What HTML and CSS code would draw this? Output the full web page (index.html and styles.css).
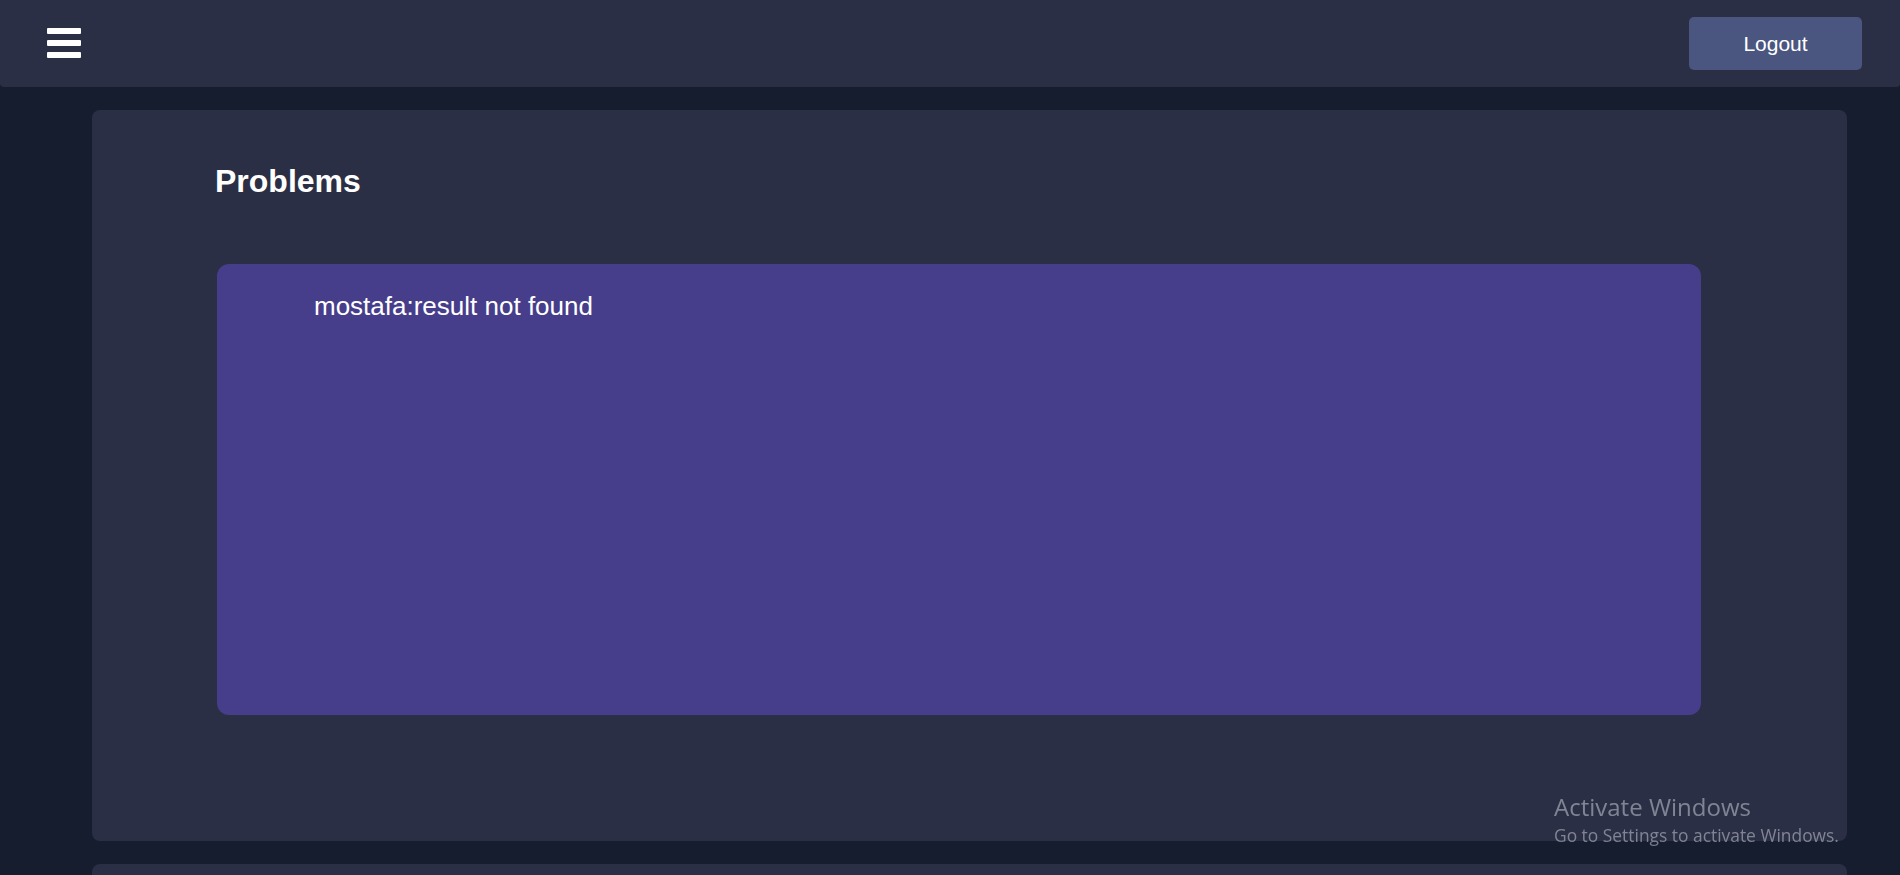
FILE: index.html
```html
<!DOCTYPE html>
<html lang="en">
<head>
<meta charset="utf-8">
<title>Problems</title>
<link rel="stylesheet" href="styles.css">
</head>
<body>
<header class="topbar">
  <button class="menu-btn" aria-label="Menu">
    <span class="bar"></span>
    <span class="bar"></span>
    <span class="bar"></span>
  </button>
  <button class="logout-btn">Logout</button>
</header>
<main class="content">
  <section class="card">
    <h1 class="card-title">Problems</h1>
    <div class="problem-box">
      <p class="problem-item">mostafa:result not found</p>
    </div>
  </section>
  <section class="card card-next"></section>
</main>
<div class="watermark">
  <div class="wm-title">Activate Windows</div>
  <div class="wm-sub">Go to Settings to activate Windows.</div>
</div>
</body>
</html>
```
FILE: styles.css
```css
html, body {
  margin: 0;
  padding: 0;
  background: #161d2f;
  font-family: "Liberation Sans", Arial, sans-serif;
  color: #ffffff;
  overflow: hidden;
  height: 875px;
}

.topbar {
  height: 87px;
  background: #2a2f45;
  display: flex;
  align-items: center;
  justify-content: space-between;
  padding: 0 38px 0 47px;
  border-radius: 0 0 4px 4px;
}

.menu-btn {
  background: none;
  border: none;
  padding: 0;
  display: flex;
  flex-direction: column;
  gap: 6px;
  cursor: pointer;
  margin-top: -2px;
}

.bar {
  display: block;
  width: 34px;
  height: 6px;
  background: #ffffff;
  border-radius: 1px;
}

.logout-btn {
  width: 173px;
  height: 53px;
  background: #4a5580;
  color: #ffffff;
  border: none;
  border-radius: 5px;
  font-family: "Liberation Sans", Arial, sans-serif;
  font-size: 21px;
  cursor: pointer;
  margin-top: -1px;
  padding: 1px 0 0;
}

.content {
  padding: 23px 53px 0 92px;
}

.card {
  background: #2a2f45;
  border-radius: 8px;
  height: 731px;
  box-sizing: border-box;
  padding: 53px 0 0 123px;
  margin-bottom: 23px;
}

.card-title {
  margin: 0;
  font-size: 32px;
  font-weight: bold;
  line-height: 37px;
}

.problem-box {
  margin-top: 64px;
  margin-left: 2px;
  width: 1484px;
  height: 451px;
  background: #463e8a;
  border-radius: 12px;
  box-sizing: border-box;
  padding: 27px 0 0 97px;
}

.problem-item {
  margin: 0;
  font-size: 26px;
  line-height: 30px;
}

.card-next {
  height: 100px;
}

.watermark {
  position: fixed;
  left: 1554px;
  top: 791px;
  color: rgba(200, 203, 212, 0.55);
  font-family: "Open Sans", "Noto Sans", sans-serif;
  pointer-events: none;
}

.wm-title {
  font-size: 24px;
  line-height: 32px;
}

.wm-sub {
  font-size: 17.4px;
  line-height: 24px;
}
```
